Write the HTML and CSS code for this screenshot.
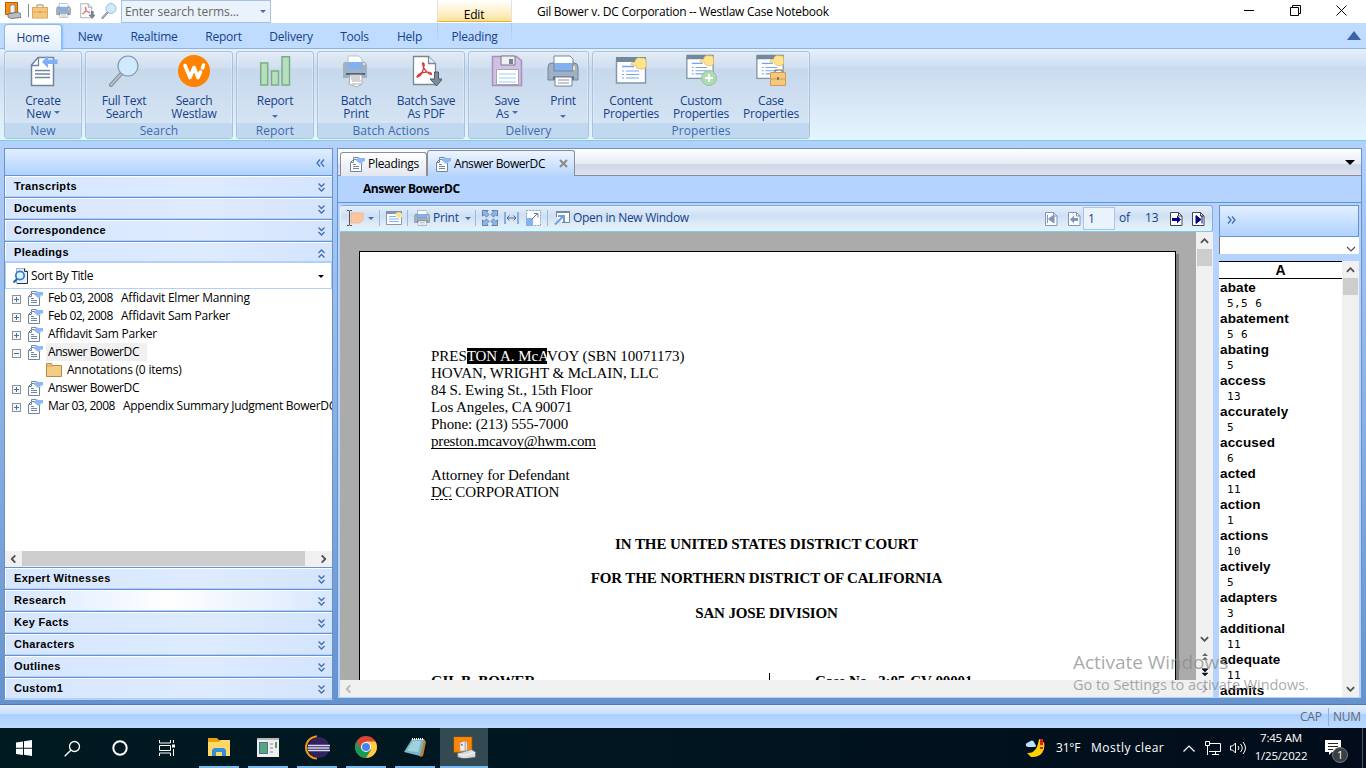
FILE: index.html
```html
<!DOCTYPE html>
<html lang="en">
<head>
<meta charset="utf-8">
<title>Gil Bower v. DC Corporation -- Westlaw Case Notebook</title>
<link rel="stylesheet" href="styles.css">
</head>
<body>
<svg class="defs" width="0" height="0">
  <defs>
    <symbol id="doc" viewBox="0 0 32 32"><path d="M4.500 10 L11 2.500 H26.500 V30.500 H4.500 Z" fill="#fff" stroke="#6d87a3" stroke-width="1.500"/><path d="M4.500 10.500h7V3M8 15.500h15M8 19h15M8 22.500h15" fill="none" stroke="#6d87a3" stroke-width="1.300"/><path d="M15 7 L21 .500 V4.500 H30.500 V9 H21 V13 Z" fill="#7db0f4"/></symbol>
    <symbol id="docs" viewBox="0 0 16 16"><path d="M.5 6.500 L3.500 3.500 H11.500 V15.500 H.5 Z" fill="#fff" stroke="#71869e"/><path d="M3.500 3.500V1.500H8M3.500 4v2.500H1M3 8.500h3M3 10.500h6M3 12.500h6" stroke="#71869e" fill="none"/><path d="M5.500 4 L9.500 .5 V2 H15 V5.500 H12.500 V7.500 H9.500 Z" fill="#8db8f4"/></symbol>
    <symbol id="lens" viewBox="0 0 32 32"><path d="M13 19L3 30" stroke="#7b8793" stroke-width="4" stroke-linecap="round"/><path d="M13 19L3 30" stroke="#b6bec8" stroke-width="2" stroke-linecap="round"/><circle cx="20" cy="11" r="10" fill="#cfeafc" stroke="#7d97b1" stroke-width="1.200"/></symbol>
    <symbol id="printer" viewBox="0 0 32 32"><path d="M7 12V1h16l3 3v8z" fill="#fff" stroke="#74859b"/><rect x="7" y="8" width="19" height="8" fill="#82b1ef"/><path d="M5 8h2v8h19V8h1q4 0 4 4v13H1V12q0-4 4-4z" fill="#a0b1c6" stroke="#74859b"/><path d="M27 11v4" stroke="#ffe288" stroke-width="2"/><path d="M6 23h21" stroke="#52677f" stroke-width="3"/><path d="M8 22h17v9H8z" fill="#fff" stroke="#74859b"/><path d="M11 25h11M11 28h11" stroke="#8293a6"/></symbol>
    <symbol id="pdf" viewBox="0 0 32 32"><path d="M3.500 1.500h15l7 7v21h-22z" fill="#fff" stroke="#7a8794" stroke-width="1.300"/><path d="M18.500 1.500v7h7" fill="#edf1f5" stroke="#7a8794" stroke-width="1.300"/><path d="M13 10c-2-3 2-3 1 1-1 5-3 10-6 11-2 1-1-2 3-4 4-1 8-1 10 0 2 2-2 2-4-1-2-2-4-4-4-7z" fill="none" stroke="#d33a3a" stroke-width="1.300"/><path d="M24.500 17h4v7h4L26.500 31 20 24h4.500z" fill="#7f8c99" stroke="#4d5965"/></symbol>
    <symbol id="brief" viewBox="0 0 16 16"><path d="M5 4V2h6v2" fill="none" stroke="#a5855b"/><rect x=".5" y="4.500" width="15" height="10.500" fill="#f4c97d" stroke="#dda85c"/><path d="M1 9h14" stroke="#dda85c"/><path d="M8 8v2" stroke="#a5855b"/></symbol>
    <symbol id="props" viewBox="0 0 32 32"><rect x="1.500" y="5" width="29" height="23" fill="#fff" stroke="#8398ac" stroke-width="1.500"/><path d="M1 2h30v5H1z" fill="#74889c"/><path d="M7 11.500h12" stroke="#76a5f0" stroke-width="1.500"/><path d="M7 16h2m2 0h13M7 19.500h2m2 0h13M7 23h2m2 0h13" stroke="#76a5f0" stroke-width="1.200"/><path d="M16 9q0-2 4-2 1-5 5-4h4q2 0 2 4v5q-3 3-6 2l-3-1q-2-2-1-3-5 1-5-1z" fill="#ffe391" stroke="#dfb94e" stroke-width=".7"/></symbol>
    <symbol id="case" viewBox="0 0 32 32"><path d="M0 0h27v23H0z" fill="#ff8600" stroke="#b45d00"/><path d="M9 9l8-3v15H9zM17 6l3 3v12h-3z" fill="#eee" stroke="#888" stroke-width=".7"/><path d="M6 25l20-6 7 4v7l-18 3-9-3z" fill="#d9dde0" stroke="#777"/><path d="M6 25l9 3 18-5" fill="none" stroke="#fff"/><circle cx="12" cy="12" r="1.500" fill="#777"/></symbol>
    <symbol id="case-small" viewBox="0 0 16 17"><path d="M.5.5h12v12H.5z" fill="#ff8c0a" stroke="#b45d00"/><path d="M5 3.500l3-1 2 1V11H5z" fill="#f2f2f2" stroke="#777" stroke-width=".8"/><path d="M3 12l10-2 3 2v3.500L6 16.500 3 15z" fill="#b9bdc1" stroke="#666" stroke-width=".8"/></symbol>
    <symbol id="down2" viewBox="0 0 8 9"><path d="M1 .5l3 3 3-3M1 5l3 3 3-3" fill="none" stroke="#426fb1" stroke-width="1.300"/></symbol>
    <symbol id="chev" viewBox="0 0 10 6"><path d="M1 1l4 4 4-4" fill="none" stroke="#505050" stroke-width="2"/></symbol>
    <symbol id="page" viewBox="0 0 13 15"><path d="M.5 1.500h8l3.500 3.500v9.500H.5z" fill="#fff" stroke="currentColor"/><path d="M8.500 1.500v3.500h3.500" fill="none" stroke="currentColor"/></symbol>
  </defs>
</svg>

<header class="titlebar">
  <div class="quick">
    <svg class="q-case"><use href="#case-small"/></svg><i class="q-sep"></i>
    <svg class="i16"><use href="#brief"/></svg>
    <svg class="i15 q-print"><use href="#printer"/></svg>
    <svg class="i16 q-pdf"><use href="#pdf"/></svg>
    <svg class="i16"><use href="#lens"/></svg>
  </div>
  <div class="searchbox"><span>Enter search terms...</span><i class="tri"></i></div>
  <div class="edit-tab"><span>Edit</span></div>
  <h1>Gil Bower v. DC Corporation -- Westlaw Case Notebook</h1>
  <div class="winbtns">
    <svg width="11" height="11"><path d="M0 5.500h10" stroke="#000"/></svg>
    <svg width="11" height="11"><path d="M.5 2.500h8v8h-8zM2.500 2.500v-2h8v8h-2" fill="none" stroke="#000"/></svg>
    <svg width="11" height="11"><path d="M.5.5l10 10M10.500.5l-10 10" stroke="#000"/></svg>
  </div>
</header>

<nav class="tabs">
  <a class="home">Home</a><a class="t-new">New</a><a class="t-real">Realtime</a><a class="t-rep">Report</a><a class="t-del">Delivery</a><a class="t-tools">Tools</a><a class="t-help">Help</a><a class="t-plead">Pleading</a>
  <svg class="collapse" width="14" height="9"><path d="M0 9L7 0l7 9z" fill="#3d62a8"/></svg>
</nav>

<section class="ribbon">
  <div class="group g-new"><div class="btns"><a class="b78"><svg class="i32"><use href="#doc"/></svg><span>Create<br>New <i class="tri"></i></span></a></div><b>New</b></div>
  <div class="group g-search"><div class="btns"><a><svg class="i32"><use href="#lens"/></svg><span>Full Text<br>Search</span></a><a><svg class="i32" viewBox="0 0 32 32"><circle cx="16" cy="16" r="16" fill="#ff8200"/><path d="M7 10.500l5 12 4-10 4 10L22.500 17M24.500 13l1-3" fill="none" stroke="#fff" stroke-width="3.600" stroke-linecap="round" stroke-linejoin="round"/></svg><span>Search<br>Westlaw</span></a></div><b>Search</b></div>
  <div class="group g-report"><div class="btns"><a class="b76"><svg class="i32" viewBox="0 0 32 32"><path d="M1.700 8h7v22h-7zM12.500 16h7v14h-7zM23 1.700h7.500V30H23z" fill="#b7dfbd" stroke="#79ae83" stroke-width="1.500"/></svg><span>Report<br><i class="tri low"></i></span></a></div><b>Report</b></div>
  <div class="group g-batch"><div class="btns"><a><svg class="i32" viewBox="0 0 32 32"><path d="M8 12V1h11l3 3v8z" fill="#fff" stroke="#b4c2d2"/><rect x="8" y="7" width="14" height="7" fill="#82b1ef"/><path d="M5 7h3v7h14V7q5-1 5 5v11H3V10q0-3 2-3z" fill="#a0b1c6"/><path d="M24 8v2" stroke="#ffe288" stroke-width="2"/><path d="M6 19h19" stroke="#52677f" stroke-width="2"/><path d="M10 20h12v9l-5 3-8-3z" fill="#fff" stroke="#a6adb5"/><path d="M11 22h9M11 24h9M12 26h9M12 29h9" stroke="#a8a8a8"/></svg><span>Batch<br>Print</span></a><a><svg class="i32"><use href="#pdf"/></svg><span>Batch Save<br>As PDF</span></a></div><b>Batch Actions</b></div>
  <div class="group g-delivery"><div class="btns"><a class="b72"><svg class="i32" viewBox="0 0 32 32"><path d="M1.500 1.500h24l5 4v25h-29z" fill="#d0c0e3" stroke="#a493b9" stroke-width="1.500"/><path d="M10 1h14v9H10z" fill="#eef0f2" stroke="#7b7887"/><path d="M18 4h4v5h-4z" fill="#77848e"/><path d="M5.500 14.500h22v15h-22z" fill="#fff" stroke="#aaa0b9"/><path d="M8 19h17M8 23h17M8 27h17" stroke="#b8e2f8" stroke-width="1.500"/></svg><span>Save<br>As <i class="tri"></i></span></a><a class="b40"><svg class="i32"><use href="#printer"/></svg><span>Print<br><i class="tri low"></i></span></a></div><b>Delivery</b></div>
  <div class="group g-props"><div class="btns"><a><svg class="i32"><use href="#props"/></svg><span>Content<br>Properties</span></a><a><svg class="i32" viewBox="0 0 32 32"><use href="#props" x="0" y="-2" width="30" height="29"/><circle cx="24" cy="23" r="7.500" fill="#aedbb3" stroke="#91c59a"/><path d="M24 19v8M20 23h8" stroke="#fff" stroke-width="2"/></svg><span>Custom<br>Properties</span></a><a><svg class="i32" viewBox="0 0 32 32"><use href="#props" x="0" y="-2" width="30" height="29"/><path d="M20 17v-2h7v2" fill="none" stroke="#765e3d"/><path d="M15.500 17.500h15v13h-15zM15 24h16" fill="#f4c97d" stroke="#d19b55"/><path d="M23 22v3" stroke="#9d733d" stroke-width="2"/></svg><span>Case<br>Properties</span></a></div><b>Properties</b></div>
</section>

<main class="workspace">
  <aside class="side">
    <div class="side-head"><svg width="9" height="8"><path d="M4 .5L1 4l3 3.500M8 .5L5 4l3 3.500" fill="none" stroke="#426fb1" stroke-width="1.300"/></svg></div>
    <div class="acc">Transcripts<svg><use href="#down2"/></svg></div>
    <div class="acc">Documents<svg><use href="#down2"/></svg></div>
    <div class="acc">Correspondence<svg><use href="#down2"/></svg></div>
    <div class="acc open">Pleadings<svg class="up"><use href="#down2"/></svg></div>
    <div class="sort"><svg width="16" height="16"><path d="M3.500.5h8l3 3v12h-11z" fill="#e9f0f7" stroke="#a7b2be"/><path d="M11.500.5v3h3V15.500H4" fill="none" stroke="#273447"/><circle cx="7" cy="7.500" r="4.200" fill="#dff4ff" stroke="#2a80d8" stroke-width="1.800"/><path d="M4 11L.5 14.500" stroke="#2459a2" stroke-width="2"/></svg><span>Sort By Title</span><i class="tri dark"></i></div>
    <ul class="tree">
      <li><i class="pm plus"></i><svg class="i16"><use href="#docs"/></svg><span class="date">Feb 03, 2008</span><span class="name">Affidavit Elmer Manning</span></li>
      <li><i class="pm plus"></i><svg class="i16"><use href="#docs"/></svg><span class="date">Feb 02, 2008</span><span class="name">Affidavit Sam Parker</span></li>
      <li><i class="pm plus"></i><svg class="i16"><use href="#docs"/></svg><span>Affidavit Sam Parker</span></li>
      <li><i class="pm"></i><svg class="i16"><use href="#docs"/></svg><span class="sel tight">Answer BowerDC</span></li>
      <li class="child"><svg class="i16" viewBox="0 0 16 16"><path d="M.5 1.500h5l1 2h9v11H.5z" fill="#f5cd81" stroke="#b48b50"/><path d="M1 4h6" stroke="#d29b4f"/></svg><span>Annotations (0 items)</span></li>
      <li><i class="pm plus"></i><svg class="i16"><use href="#docs"/></svg><span class="tight">Answer BowerDC</span></li>
      <li><i class="pm plus"></i><svg class="i16"><use href="#docs"/></svg><span class="date wide">Mar 03, 2008</span><span class="name long">Appendix Summary Judgment BowerDC</span></li>
    </ul>
    <div class="hbar side-bar"><svg class="left"><use href="#chev"/></svg><i></i><svg class="right"><use href="#chev"/></svg></div>
    <div class="acc">Expert Witnesses<svg><use href="#down2"/></svg></div>
    <div class="acc hot">Research<svg><use href="#down2"/></svg></div>
    <div class="acc">Key Facts<svg><use href="#down2"/></svg></div>
    <div class="acc">Characters<svg><use href="#down2"/></svg></div>
    <div class="acc">Outlines<svg><use href="#down2"/></svg></div>
    <div class="acc">Custom1<svg><use href="#down2"/></svg></div>
  </aside>

  <section class="panel">
    <div class="doc-tabs">
      <div class="dt first"><svg class="i16"><use href="#docs"/></svg><span>Pleadings</span></div>
      <div class="dt current"><svg class="i16"><use href="#docs"/></svg><span class="tight">Answer BowerDC</span><svg class="x" width="9" height="9"><path d="M1 1l7 7M8 1L1 8" stroke="#8a8a8a" stroke-width="2"/></svg></div>
      <i class="tri dark"></i>
    </div>
    <h2>Answer BowerDC</h2>
    <div class="content">
      <div class="viewer">
        <div class="toolbar">
          <svg class="tb-note" width="16" height="16"><path d="M2.500 1v14M0 .5h2l.5.5.5-.5h2M0 15.500h2l.5-.5.5.5h2" fill="none" stroke="#555"/><path d="M4 3h12v7l-3 3H4z" fill="#ffc69e" stroke="#eba982" stroke-width=".6"/></svg><i class="tri"></i><i class="sep s1"></i>
          <svg width="16" height="14" class="tb-prop"><path d="M.5.500h15v13H.5z" fill="#fff" stroke="#8998a8"/><path d="M0 0h16v3H0z" fill="#8195aa"/><path d="M3 5.500h7M3 8h10M3 10.500h10" stroke="#80b0ed"/><path d="M9 3q4-4 7 0v3l-4 1z" fill="#ffe391"/></svg><i class="sep s2"></i>
          <svg class="i16 tb-print"><use href="#printer"/></svg><span class="tb-ptxt">Print</span><i class="tri"></i><i class="sep s3"></i>
          <svg width="16" height="16" class="tb-full" viewBox="0 0 17 17"><path d="M.5.5h6L5 2.300l2.500 2.500-2.700 2.700L2.300 5 .5 6.500zM16.500.500v6l-1.800-1.500-2.500 2.500-2.700-2.700L12 2.300 10.500.5zM.5 16.500v-6l1.800 1.500 2.500-2.500 2.700 2.700L5 14.700l1.500 1.800zM16.500 16.500h-6l1.500-1.800-2.500-2.500 2.700-2.700 2.500 2.500 1.800-1.500z" fill="#8fb4ee" stroke="#426b9a" stroke-width=".8"/></svg>
          <svg width="15" height="12" class="tb-fit"><path d="M0 0h2v12H0zM13 0h2v12h-2z" fill="#86aee5"/><path d="M3 6h9M5.500 3.500L3 6l2.500 2.500M9.500 3.500L12 6 9.500 8.500" fill="none" stroke="#526b88"/></svg>
          <svg width="15" height="16" class="tb-size"><path d="M.5.500h14v15H.5z" fill="#fff" stroke="#8aa4bd" stroke-dasharray="2 1"/><path d="M0 8h7v8H0z" fill="#83b3f0"/><path d="M6 9l5-5M8 3.500h4v4" fill="none" stroke="#617b9a"/></svg><i class="sep s4"></i>
          <svg width="16" height="16" class="tb-open"><path d="M2.500 7V1.500h13v11H8" fill="#fff" stroke="#6e8297"/><path d="M2 1h14v2H2z" fill="#768ba1"/><path d="M1 14.500l8-8M4 6h6v6" fill="none" stroke="#6f9fda" stroke-width="2"/></svg><span class="tb-new">Open in New Window</span>
          <div class="pager">
            <svg class="dim" width="13" height="15"><use href="#page"/><path d="M2.500 4v8M9 4v8L3.500 8z" fill="currentColor" stroke="currentColor"/></svg>
            <svg class="dim p2" width="13" height="15"><use href="#page"/><path d="M2 8.500L6 4.500v2.500h4v3H6v2.500z" fill="currentColor"/></svg>
            <span class="pnum">1</span><span class="of">of</span><span class="total">13</span>
            <svg class="p3" width="13" height="15"><use href="#page"/><path d="M11 8.500L7 4.500v2.500H2v3h5v2.500z" fill="#000080"/></svg>
            <svg class="p4" width="13" height="15"><use href="#page"/><path d="M10 4.500v8M4 4.500v8l5-4z" fill="#000080" stroke="#000080"/></svg>
          </div>
        </div>
        <div class="canvas-row">
          <div class="canvas">
            <article class="sheet">
              <div class="addr">
                <p class="l1">PRES<mark>TON A. McA</mark>VOY (SBN 10071173)</p>
                <p>HOVAN, WRIGHT &amp; McLAIN, LLC</p>
                <p>84 S. Ewing St., 15th Floor</p>
                <p>Los Angeles, CA 90071</p>
                <p>Phone: (213) 555-7000</p>
                <p class="mail"><u>preston.mcavoy@hwm.com</u></p>
                <p>&nbsp;</p>
                <p>Attorney for Defendant</p>
                <p><u class="dash">DC</u> CORPORATION</p>
              </div>
              <div class="court"><p>IN THE UNITED STATES DISTRICT COURT</p><p class="c2">FOR THE NORTHERN DISTRICT OF CALIFORNIA</p><p class="c3">SAN JOSE DIVISION</p></div>
              <div class="caption"><span class="party">GIL B. BOWER</span><i></i><span>Case No. &nbsp;3:05-CV-00001</span></div>
            </article>
          </div>
          <div class="vbar doc-v"><svg class="top"><use href="#chev"/></svg><i></i><svg class="bot"><use href="#chev"/></svg>
            <svg class="pgnav" width="8" height="24"><path d="M1 4l3-3 3 3zM1 8l3-3 3 3z" fill="#666"/><path d="M1 17l3 3 3-3zM1 21l3 3 3-3zM1 16.500h6" fill="#111" stroke="#111" stroke-width=".5"/></svg>
          </div>
        </div>
        <div class="hbar doc-h"><svg class="left"><use href="#chev"/></svg><svg class="right"><use href="#chev"/></svg></div>
      </div>
      <div class="index">
        <div class="index-head"><svg width="9" height="8"><path d="M1 .5L4 4 1 7.500M5 .5L8 4 5 7.500" fill="none" stroke="#426fb1" stroke-width="1.300"/></svg></div>
        <div class="combo"><svg width="10" height="6"><path d="M1 1l4 4 4-4" fill="none" stroke="#555" stroke-width="1.200"/></svg></div>
        <div class="index-body">
          <div class="words">
            <div class="letter">A</div>
            <dl>
              <dt>abate</dt><dd>5,5 6</dd><dt>abatement</dt><dd>5 6</dd><dt>abating</dt><dd>5</dd><dt>access</dt><dd>13</dd><dt>accurately</dt><dd>5</dd><dt>accused</dt><dd>6</dd><dt>acted</dt><dd>11</dd><dt>action</dt><dd>1</dd><dt>actions</dt><dd>10</dd><dt>actively</dt><dd>5</dd><dt>adapters</dt><dd>3</dd><dt>additional</dt><dd>11</dd><dt>adequate</dt><dd>11</dd><dt>admits</dt>
            </dl>
          </div>
          <div class="vbar"><svg class="top"><use href="#chev"/></svg><i></i><svg class="bot"><use href="#chev"/></svg></div>
        </div>
      </div>
    </div>
  </section>
</main>

<footer class="status"><span class="cap">CAP</span><span class="num">NUM</span></footer>

<footer class="taskbar">
  <div class="cell"><svg width="16" height="16"><path d="M0 2.500l7-1v6.200H0zM8 1.300L16 0v7.700H8zM0 8.700h7v6.200l-7-1zM8 8.700h8V16l-8-1.300z" fill="#fff"/></svg></div>
  <div class="cell"><svg width="17" height="17"><circle cx="10.500" cy="6.500" r="5" fill="none" stroke="#fff" stroke-width="1.300"/><path d="M6.800 10.200L.7 16.300" stroke="#fff" stroke-width="1.300"/></svg></div>
  <div class="cell"><svg width="16" height="16"><circle cx="8" cy="8" r="6.700" fill="none" stroke="#fff" stroke-width="2"/></svg></div>
  <div class="cell tv"><svg width="17" height="16"><path d="M.5 0v3h11V0M.5 16v-3h11v3M.5 5.500h11v5H.5zM14.500 0v3M14.500 9v7" fill="none" stroke="#fff"/><path d="M13 4.500h3v3h-3z" fill="#fff"/></svg></div>
  <div class="app a1"><svg width="22" height="19"><path d="M0 0h9l2 2h10v15H0z" fill="#e9a20c"/><path d="M0 4h11l2-2h9v16H0z" fill="#ffd869"/><path d="M4 18v-6l2-2h10l2 2v6h-4v-4H8v4z" fill="#338fdc"/></svg></div>
  <div class="app"><svg width="22" height="19"><path d="M0 0h22v19H0z" fill="#eee"/><path d="M0 0h22v2H0z" fill="#bbb"/><path d="M2 4h9v12H2z" fill="#4a6e94"/><path d="M3 5h7v10H3z" fill="#54a680"/><path d="M13 5h3v2h-3zM13 9h3v2h-3zM13 13h3v2h-3z" fill="#bbb"/><path d="M19 4v6" stroke="#268056" stroke-width="1.500"/></svg></div>
  <div class="app"><svg width="25" height="23"><path d="M12 .5a11 11 0 0 0 0 22" fill="none" stroke="#f29419" stroke-width="2"/><circle cx="14" cy="11.500" r="10.500" fill="#32235f"/><path d="M3 9.500h22M2.500 12h22M3 14.500h22" stroke="#ddd9ef" stroke-width="1.500"/></svg></div>
  <div class="app"><svg width="22" height="22" viewBox="0 0 22 22"><circle cx="11" cy="11" r="11" fill="#dc4437"/><path d="M1.500 5.500A11 11 0 0 0 11 22L15.500 14H7z" fill="#159d58"/><path d="M20.500 5.500H11l5 8.500-5 8A11 11 0 0 0 20.500 5.500z" fill="#ffcd40"/><circle cx="11" cy="11" r="5" fill="#fff"/><circle cx="11" cy="11" r="4" fill="#4285f4"/></svg></div>
  <div class="app"><svg width="22" height="21"><path d="M17 2l3 0 2 3-3 14-3 1z" fill="#b9823e"/><path d="M8 2h12l-4 17L0 15z" fill="#78b8c9"/><path d="M9 4h8l-3 11-11-1z" fill="#b3e0e7" opacity=".65"/><path d="M8 2h12" stroke="#fff" stroke-width="2" stroke-dasharray="1 1"/></svg></div>
  <div class="app active"><svg width="23" height="23" viewBox="-1 -1 34 34"><use href="#case" width="32" height="32"/></svg></div>
  <div class="tray">
    <svg class="moon" width="20" height="20"><path d="M14 1q7 2 5 10-3 9-13 8l-4-4q10 1 12-14z" fill="#ffcf00"/><path d="M1 8q-1-3 3-4 4-4 6 2 2 2 0 3H3z" fill="#bce2fb"/><path d="M16.500 1v6M16.500 9v2" stroke="#e51d25" stroke-width="3"/></svg>
    <span class="temp">31°F</span><span class="wx">Mostly clear</span>
    <svg class="tr-up" width="12" height="7"><path d="M.5 6.500L6 1l5.500 5.500" fill="none" stroke="#fff" stroke-width="1.200"/></svg>
    <svg class="tr-net" width="17" height="15"><path d="M5 2.500h10.500v8H4M7 13.500h7M10.500 11v3M.5.500h4v4h-4zM2.500 5v9" fill="none" stroke="#fff"/></svg>
    <svg class="tr-vol" width="17" height="14"><path d="M.5 5v4h2l3 3V2l-3 3zM8 5q2 2 0 4M10.500 3q3.500 4 0 8M13 1q5 6 0 12" fill="none" stroke="#fff"/></svg>
    <div class="clock">7:45 AM<br>1/25/2022</div>
    <div class="notif"><svg width="17" height="17"><path d="M0 0h16v12H7l-3 3v-3H0z" fill="#fff"/><path d="M3 3.500h10M3 6.500h10M3 9.500h5" stroke="#222"/></svg><em>1</em></div>
    <i class="peek"></i>
  </div>
</footer>
<div class="watermark"><strong>Activate Windows</strong><span>Go to Settings to activate Windows.</span></div>
</body>
</html>
```
FILE: styles.css
```css
* { box-sizing: border-box; }
body { margin: 0; width: 1366px; height: 768px; overflow: hidden; display: flex; flex-direction: column; position: relative; background: #fff; color: #000; font: 12px/16px "Open Sans", "Noto Sans", sans-serif; letter-spacing: -.22px; white-space: nowrap; }
h1, h2, p, ul, dl, dd { margin: 0; padding: 0; }
svg { display: block; flex: none; overflow: visible; }
.defs { position: absolute; }
.i15 { width: 15px; height: 15px; }
.i16 { width: 16px; height: 16px; }
.i32 { width: 32px; height: 32px; }
.tight { letter-spacing: -.42px; }
.tri { display: inline-block; flex: none; width: 0; height: 0; border: 3px solid transparent; border-top-color: #456eaf; border-bottom: 0; }
.tri.dark { border-top-color: #000; }

.titlebar { height: 23px; flex: none; display: flex; background: #fff; }
.quick { width: 121px; padding: 3px 0 0 5px; display: flex; flex: none; }
.q-case { width: 16px; height: 17px; margin-top: -1px; }
.q-sep { width: 1px; height: 13px; background: #888; margin: 1px 3px 0 7px; }
.q-print { margin-left: 8px; }
.q-pdf { margin: 0 6px 0 8px; }
.searchbox { width: 150px; height: 23px; border: 1px solid #a8c2e6; background: #eaf2fb; display: flex; align-items: center; justify-content: space-between; padding: 0 4px 0 3px; color: #666; font-size: 12px; letter-spacing: -.08px; }
.edit-tab { width: 75px; margin-left: 166px; height: 22px; border: solid #dfe3e8; border-width: 0 1px; border-bottom: 1px solid #eeb02d; background: linear-gradient(#fff, #fdf0c8 60%, #ffe199); text-align: center; padding: 7px 1px 0 0; }
h1 { font: 12px/16px "Open Sans", "Noto Sans", sans-serif; letter-spacing: -.26px; padding: 4px 0 0 25px; width: 500px; }
.winbtns { margin-left: auto; padding: 5px 19px 0 0; display: flex; gap: 35px; }

.tabs { height: 26px; flex: none; display: flex; background: #bfdbff; border-bottom: 1px solid #8db2e3; padding-left: 4px; color: #15428b; position: relative; }
.tabs a { padding-top: 6px; text-align: center; }
.tabs .home { width: 58px; height: 26px; margin-top: 1px; padding-top: 5px; border: 1px solid #91bbe6; border-bottom: 0; border-radius: 4px 4px 0 0; background: linear-gradient(#f9fcff, #e3eefb); box-shadow: 1px 0 2px #78bfff; }
.t-new { width: 56px; }
.t-real { width: 72px; }
.t-rep { width: 67px; }
.t-del { width: 68px; }
.t-tools { width: 59px; }
.t-help { width: 51px; }
.t-plead { width: 79px; background: linear-gradient(#aec5e3, #bfdbff) 2px 0 / 1px 20px no-repeat, linear-gradient(#aec5e3, #bfdbff) 76px 0 / 1px 20px no-repeat; }
.collapse { margin: 8px 5px 0 auto; }

.ribbon { height: 92px; flex: none; display: flex; gap: 3px; padding: 2px 0 0 4px; background: linear-gradient(#e6f0fb, #cfdff3 19%, #c8daef 20%, #dbe9f7 65%, #e4f5fe); border-bottom: 1px solid #72cfe9; color: #15428b; }
.group { height: 88px; border: 1px solid #a9c3dd; border-radius: 3px; display: flex; flex-direction: column; background: linear-gradient(#e1ebf6, #d2dfef 18%, #c7d8ec 20%, #d9e7f5); box-shadow: inset 0 0 0 1px rgba(255,255,255,.25); overflow: hidden; }
.group b { height: 15px; line-height: 16px; background: #c1d8f1; text-align: center; font-weight: 400; color: #3e6aaa; letter-spacing: .1px; }
.btns { display: flex; flex: 1; padding: 3px 0 0 3px; }
.btns a { width: 70px; display: flex; flex-direction: column; align-items: center; text-align: center; line-height: 13px; }
.btns a span { margin-top: 7px; }
.btns .tri { vertical-align: 4px; }
.btns .tri.low { vertical-align: 0; }
.btns .b78 { width: 70px; }
.btns .b76 { width: 70px; }
.btns .b72 { width: 70px; }
.btns .b40 { width: 42px; }
.g-new, .g-report { width: 78px; }
.g-search, .g-batch { width: 148px; }
.g-delivery { width: 121px; }
.g-props { width: 218px; }

.workspace { height: 564px; flex: none; display: flex; padding: 7px 4px 0; background: linear-gradient(#b4d1fa, #a4c4f2 15%, #6591cd); border-bottom: 1px solid #4d79b8; }
.side { width: 329px; height: 552px; border: 1px solid #6593cf; border-bottom-color: #b4d4ff; background: #fff; display: flex; flex-direction: column; overflow: hidden; }
.side-head { height: 26px; flex: none; background: linear-gradient(#e3efff, #afd2ff); display: flex; justify-content: flex-end; padding: 10px 7px 0; }
.acc { height: 22px; flex: none; border-top: 1px solid #6593cf; border-bottom: 1px solid #b0d0fa; box-shadow: inset 1px 1px #fff; background: linear-gradient(90deg, #d5e6fe, #deebff 60%, #d3e4fd); display: flex; justify-content: space-between; padding: 2px 6px 0 9px; font: bold 11px/16px "Liberation Sans", Arial, sans-serif; letter-spacing: .32px; }
.acc svg { width: 9px; height: 9px; margin-top: 5px; }
.acc .up { transform: scaleY(-1); }
.acc.open { border-bottom-width: 2px; }
.acc.hot { background: linear-gradient(90deg, #d5e6fe, #fff 50%, #d9e8fe); }
.sort { height: 26px; flex: none; border: 1px solid #b0d0ff; border-top: 0; display: flex; align-items: center; padding: 1px 7px 0; }
.sort span { margin-left: 2px; letter-spacing: -.35px; }
.sort .tri { margin-left: auto; }
.tree { list-style: none; flex: 1; overflow: hidden; }
.tree li { height: 18px; display: flex; align-items: center; padding-left: 7px; }
.tree li .i16 { margin: 0 0 0 7px; }
.tree li span { margin-left: 2px; padding: 0 2px; line-height: 18px; }
.tree .date { width: 68px; letter-spacing: -.5px; }
.tree .date.wide { width: 70px; }
.tree .name { margin-left: 5px; }
.tree .name.long { letter-spacing: -.28px; }
.tree .sel { background: #f0f0f0; padding-right: 8px; }
.tree .child { padding-left: 34px; }
.tree .child span { margin-left: 3px; }
.pm { width: 9px; height: 9px; flex: none; margin-top: 3px; border: 1px solid #919191; background: linear-gradient(#426fb1, #426fb1) center / 5px 1px no-repeat, #f5f6f7; }
.pm.plus { background: linear-gradient(#426fb1, #426fb1) center / 5px 1px no-repeat, linear-gradient(#426fb1, #426fb1) center / 1px 5px no-repeat, #f5f6f7; }
.hbar { background: #f0f0f0; display: flex; align-items: center; flex: none; }
.hbar svg, .vbar .top, .vbar .bot { width: 9px; height: 6px; }
.hbar .left { transform: rotate(90deg); }
.hbar .right { transform: rotate(-90deg); }
.side-bar { height: 16px; padding: 0 4px 1px; }
.side-bar i { width: 283px; height: 15px; background: #cdcdcd; margin-left: 4px; }
.side-bar .right { margin-left: auto; }

.panel { width: 1025px; height: 550px; margin-left: 4px; border: 1px solid #6593cf; border-bottom: 0; background: #b4d4ff; display: flex; flex-direction: column; }
.doc-tabs { height: 27px; flex: none; display: flex; background: linear-gradient(#fff, #e7ebf4 58%, #cfd6e8 60%, #dde2ef); border-bottom: 1px solid #8d8d99; padding: 1px 6px 0 2px; }
.doc-tabs > .tri { margin: 10px 0 0 auto; border-width: 5px 5px 0; }
.dt { display: flex; align-items: center; border: 1px solid #8d8d99; border-bottom: 0; border-radius: 3px 3px 0 0; height: 24px; margin-top: 2px; padding: 0 0 1px 9px; width: 87px; background: linear-gradient(#fff, #e3e6ef); }
.dt span { margin-left: 2px; }
.dt.first span { letter-spacing: -.3px; }
.dt.current { height: 26px; margin-top: 0; width: 148px; background: linear-gradient(#eef6ff, #b7d4fc); padding: 0 0 0 8px; }
.dt.current .x { margin-left: auto; margin-right: 6px; }
h2 { height: 27px; flex: none; font: bold 12px/25px "Open Sans", sans-serif; letter-spacing: -.45px; border-bottom: 1px solid #6593cf; padding-left: 25px; }
.content { display: flex; flex: 1; padding: 2px 0 1px 2px; }
.viewer { width: 873px; display: flex; flex-direction: column; }
.toolbar { height: 27px; flex: none; border: 1px solid #86aee0; border-bottom-color: #80c9ee; border-left-color: #e8f3ff; border-radius: 3px; background: linear-gradient(#e4eefb, #cedff3 40%, #ddebf7 70%, #e1f5fc); display: flex; align-items: center; padding: 0 0 1px 6px; color: #15428b; }
.tb-note { margin-right: 5px; }
.sep { width: 1px; height: 16px; background: #9bb9df; }
.s1 { margin: 0 6px 0 5px; }
.s2 { margin: 0 6px 0 5px; }
.tb-ptxt { margin: 0 7px 0 3px; width: 25px; }
.s3 { margin: 0 6px 0 4px; }
.tb-fit { margin: 0 7px 0 6px; }
.s4 { margin: 0 6px; }
.tb-new { margin-left: 3px; letter-spacing: -.28px; }
.pager { margin-left: auto; display: flex; align-items: center; padding-right: 7px; }
.pager svg { color: #444; }
.pager .dim { color: #7289af; opacity: .85; }
.p2 { margin-left: 10px; }
.pnum { width: 32px; height: 23px; margin-left: 2px; border: 1px solid #abc3e5; background: #eaf2fb; padding: 3px 4px; line-height: 16px; }
.of { margin-left: 4px; width: 26px; }
.total { width: 25px; }
.p4 { margin-left: 9px; }
.canvas-row { flex: 1; display: flex; min-height: 0; }
.canvas { flex: 1; background: #ababab; overflow: hidden; padding: 19px 0 0 19px; height: 448px; }
.sheet { width: 817px; height: 500px; background: #fff; border: 1px solid #000; box-shadow: 3px 3px #7e7e7e; padding: 96px 0 0 71px; font: 15px/17px "Liberation Serif", "Times New Roman", serif; letter-spacing: -.1px; }
.addr { height: 188px; }
.addr .l1 { letter-spacing: -.04px; }
.addr mark { background: #000; color: #fff; }
.mail { letter-spacing: -.18px; }
.mail u { text-decoration: none; border-bottom: 1px solid #000; display: inline-block; height: 16px; }
.dash { text-decoration: none; border-bottom: 1px dashed #000; display: inline-block; height: 16px; }
.court { width: 671px; height: 137px; text-align: center; font-weight: bold; }
.court p { height: 34px; }
.court .c2 { height: 35px; letter-spacing: -.15px; }
.court .c3 { letter-spacing: -.15px; }
.caption { display: flex; font-weight: bold; }
.caption .party { width: 338px; }
.caption i { width: 1px; height: 17px; background: #000; margin-right: 45px; }
.vbar { width: 17px; background: #f0f0f0; display: flex; flex-direction: column; align-items: center; flex: none; }
.vbar .top { transform: scaleY(-1); margin: 6px 0 5px; }
.vbar i { width: 15px; height: 17px; background: #cdcdcd; }
.vbar .bot { margin: auto 0 5px; }
.doc-v .bot { margin-bottom: 10px; }
.pgnav { margin-bottom: 4px; }
.doc-h { height: 17px; padding: 0 4px; justify-content: space-between; }
.doc-h svg { opacity: .35; }
.index { width: 140px; margin-left: 6px; display: flex; flex-direction: column; height: 492px; }
.index-head { height: 32px; flex: none; border: 1px solid #6593cf; background: linear-gradient(#e3efff, #afd2ff); padding: 10px 7px; }
.combo { height: 17px; flex: none; background: #fff; border-left: 1px solid #777; display: flex; justify-content: flex-end; padding: 9px 3px 0; margin-bottom: 7px; }
.index-body { display: flex; flex: 1; background: #fff; overflow: hidden; }
.words { width: 123px; height: 436px; overflow: hidden; }
.letter { height: 18px; border: solid #000; border-width: 1px 0; text-align: center; font: bold 14px/16px "Liberation Sans", sans-serif; }
dl { padding-top: 1px; }
dt { height: 16px; padding-left: 1px; font: bold 13.500px/16px "Liberation Sans", sans-serif; letter-spacing: .15px; }
dd { height: 15px; padding-left: 8px; font: 11px/15px "DejaVu Sans Mono", monospace; letter-spacing: .42px; }

.status { height: 23px; flex: none; display: flex; justify-content: flex-end; background: linear-gradient(#e3efff, #c9dffd 38%, #abd0ff 40%, #bcdaff); color: #646a72; padding-top: 3px; }
.cap { width: 28px; line-height: 18px; }
.num { width: 38px; border-left: 1px solid #8eb0de; padding-left: 4px; height: 18px; line-height: 18px; }

.taskbar { height: 40px; flex: none; display: flex; background: linear-gradient(90deg, #001a22, #011620 45%, #020c1b); color: #fff; }
.cell { width: 48px; display: flex; align-items: center; justify-content: center; }
.tv { width: 47px; }
.app { width: 40px; margin-left: 9px; display: flex; align-items: center; justify-content: center; border-bottom: 2px solid #76b9ed; }
.a1 { margin-left: 8px; }
.app.active { width: 48px; margin-left: 5px; background: #344a52; }
.tray { flex: 1; display: flex; align-items: center; justify-content: flex-end; }
.temp { margin-left: 11px; width: 35px; }
.wx { width: 74px; letter-spacing: .5px; }
.tr-up { margin-left: 18px; }
.tr-net { margin-left: 10px; }
.tr-vol { margin-left: 8px; }
.clock { width: 70px; text-align: center; line-height: 18px; font-size: 11.500px; padding: 0 2px 2px 0; }
.notif { width: 37px; height: 17px; margin-left: 8px; position: relative; }
.notif em { position: absolute; left: 7px; top: 7px; width: 16px; height: 16px; border-radius: 50%; background: #3a3f45; border: 1px solid #777; text-align: center; font: 11px/14px "Open Sans", sans-serif; }
.peek { width: 1px; height: 40px; background: #4c545e; margin: 0 3px 0 0; }

.watermark { position: absolute; left: 1073px; top: 651px; color: rgba(140,140,140,.75); display: flex; flex-direction: column; }
.watermark strong { font-weight: 400; font-size: 19px; line-height: 22px; letter-spacing: -.05px; }
.watermark span { font-size: 14.500px; line-height: 23px; letter-spacing: -.05px; }
```
